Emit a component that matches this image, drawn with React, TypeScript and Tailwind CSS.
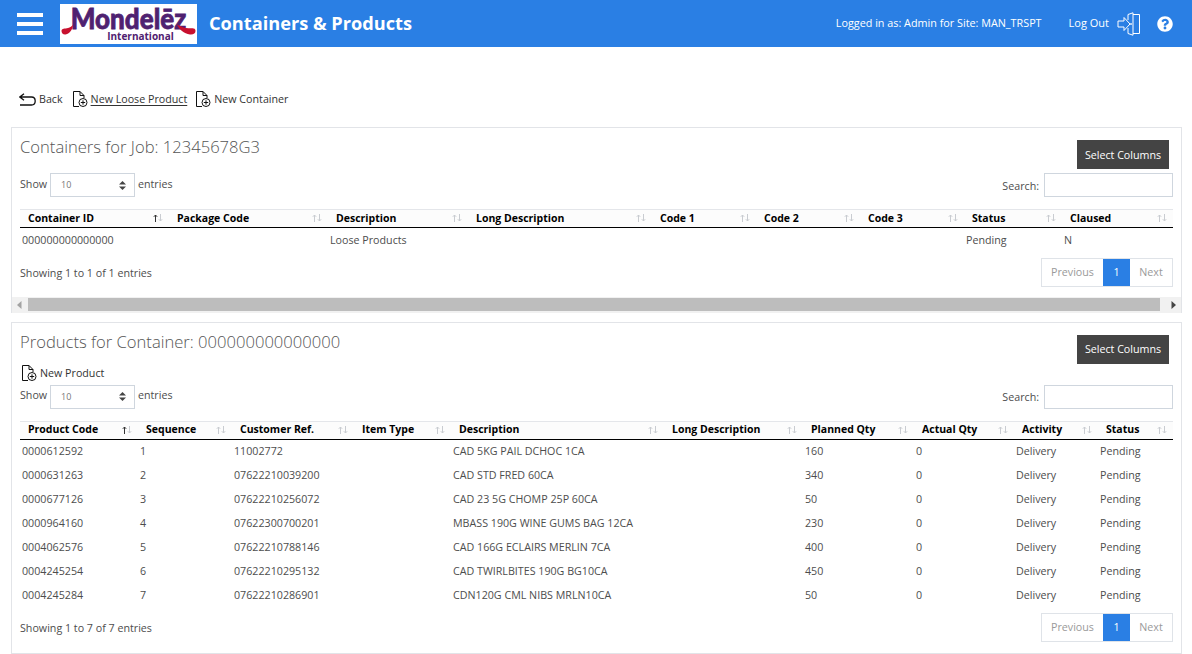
import { FaQuestionCircle } from 'react-icons/fa';

const containerCols = [
  { name: 'Container ID', w: 149, sorted: true },
  { name: 'Package Code', w: 159 },
  { name: 'Description', w: 140 },
  { name: 'Long Description', w: 184 },
  { name: 'Code 1', w: 104 },
  { name: 'Code 2', w: 104 },
  { name: 'Code 3', w: 104 },
  { name: 'Status', w: 98 },
  { name: 'Claused', w: 111 },
];

const containerRows = [['000000000000000', '', 'Loose Products', '', '', '', '', 'Pending', 'N']];

const productCols = [
  { name: 'Product Code', w: 118, sorted: true },
  { name: 'Sequence', w: 94 },
  { name: 'Customer Ref.', w: 122 },
  { name: 'Item Type', w: 97 },
  { name: 'Description', w: 213 },
  { name: 'Long Description', w: 139 },
  { name: 'Planned Qty', w: 111 },
  { name: 'Actual Qty', w: 100 },
  { name: 'Activity', w: 84 },
  { name: 'Status', w: 75 },
];

const productRows = [
  ['0000612592', '1', '11002772', '', 'CAD 5KG PAIL DCHOC 1CA', '', '160', '0', 'Delivery', 'Pending'],
  ['0000631263', '2', '07622210039200', '', 'CAD STD FRED 60CA', '', '340', '0', 'Delivery', 'Pending'],
  ['0000677126', '3', '07622210256072', '', 'CAD 23 5G CHOMP 25P 60CA', '', '50', '0', 'Delivery', 'Pending'],
  ['0000964160', '4', '07622300700201', '', 'MBASS 190G WINE GUMS BAG 12CA', '', '230', '0', 'Delivery', 'Pending'],
  ['0004062576', '5', '07622210788146', '', 'CAD 166G ECLAIRS MERLIN 7CA', '', '400', '0', 'Delivery', 'Pending'],
  ['0004245254', '6', '07622210295132', '', 'CAD TWIRLBITES 190G BG10CA', '', '450', '0', 'Delivery', 'Pending'],
  ['0004245284', '7', '07622210286901', '', 'CDN120G CML NIBS MRLN10CA', '', '50', '0', 'Delivery', 'Pending'],
];

function SortIcon({ active }: { active?: boolean }) {
  return (
    <svg width="10" height="8" viewBox="0 0 10 8" fill="none" strokeWidth="1" className="shrink-0">
      <path d="M2.5 8V1M0.8 2.8L2.5 1L4.2 2.8" stroke={active ? '#333' : '#c9ccd1'} />
      <path d="M7.5 0V7M5.8 5.2L7.5 7L9.2 5.2" stroke="#c9ccd1" />
    </svg>
  );
}

function DocIcon() {
  return (
    <svg width="16" height="18" viewBox="1 0 16 18" fill="none" stroke="#111" strokeWidth="1">
      <path d="M7 16.5H1.5V1.5H8L12 5.500V8" />
      <path d="M8 1.5V5.500H12" />
      <circle cx="11" cy="12.5" r="4" />
      <path d="M11 10.3V14.7M8.8 12.5H13.2" />
    </svg>
  );
}

function DataTable({ cols, rows }: { cols: { name: string; w: number; sorted?: boolean }[]; rows: string[][] }) {
  return (
    <table className="w-[1153px] table-fixed border-collapse">
      <colgroup>
        {cols.map((c) => (
          <col key={c.name} style={{ width: c.w }} />
        ))}
      </colgroup>
      <thead>
        <tr className="h-[18px] border-t border-b border-t-[#e4e6ea] border-b-black bg-[#fcfcfc]">
          {cols.map((c) => (
            <th key={c.name} className="pl-2 pr-[6px] text-left text-[10.5px] font-bold text-black">
              <div className="mt-[-1px] flex h-4 items-center justify-between leading-[15px]">
                <span>{c.name}</span>
                <SortIcon active={c.sorted} />
              </div>
            </th>
          ))}
        </tr>
      </thead>
      <tbody>
        {rows.map((row) => (
          <tr key={row[0]} className="h-6">
            {row.map((cell, i) => (
              <td key={i} className="truncate pl-[2px]">
                {cell}
              </td>
            ))}
          </tr>
        ))}
      </tbody>
    </table>
  );
}

function Controls() {
  return (
    <div className="flex h-6 items-center justify-between">
      <div className="flex items-center">
        <span className="mt-[-2px] w-[30px]">Show</span>
        <div className="flex h-6 w-[85px] items-center justify-between border border-[#cfd6de] pl-[10px] pr-[8px] text-[9px] text-[#777]">
          <span>10</span>
          <svg width="7" height="9" viewBox="0 0 7 9" fill="#444">
            <path d="M3.5 0L7 3.5H0Z" />
            <path d="M3.5 9L0 5.5H7Z" />
          </svg>
        </div>
        <span className="ml-[3px] mt-[-2px]">entries</span>
      </div>
      <div className="flex items-center">
        <span className="mt-[2px]">Search:</span>
        <div className="ml-[5px] h-6 w-[129px] border border-[#cfd6de]" />
      </div>
    </div>
  );
}

function Footer({ info }: { info: string }) {
  return (
    <div className="flex items-start justify-between pt-[6px]">
      <span className="mt-[1px] leading-[28px]">{info}</span>
      <div className="flex h-[29px] border border-[#dfe3e8] text-[#9a9a9a]">
        <span className="flex w-[61px] items-center justify-center">Previous</span>
        <span className="flex w-[27px] items-center justify-center bg-[#2a7fe4] text-white">1</span>
        <span className="flex w-[42px] items-center justify-center">Next</span>
      </div>
    </div>
  );
}

function SelectColumns() {
  return (
    <button className="mr-1 flex h-[29px] w-[92px] items-center justify-center bg-[#444444] pt-px text-white">
      Select Columns
    </button>
  );
}

export default function App() {
  return (
    <div
      className="h-screen overflow-hidden bg-white text-[10.7px] text-[#4d4d4d]"
      style={{ fontFamily: '"Open Sans", "Noto Sans", sans-serif' }}
    >
      {/* Header */}
      <div className="flex h-[47px] items-center bg-[#2a7fe4] text-white">
        <div className="ml-[17px] flex w-[26px] flex-col gap-[5px]">
          <div className="h-1 bg-white" />
          <div className="h-1 bg-white" />
          <div className="h-1 bg-white" />
        </div>
        <div className="relative ml-[17px] flex h-10 w-[137px] flex-col items-center bg-white text-[#4f2170]">
          <span
            className="mt-[1px] scale-y-110 text-[26px] font-black leading-[27px] [-webkit-text-stroke:0.7px_#4f2170]"
            style={{ fontFamily: 'Lato, sans-serif' }}
          >
            Mondelēz
          </span>
          <span className="mt-[-2px] ml-[24px] text-[10px] font-bold leading-[12px]">International</span>
          <svg width="137" height="40" viewBox="0 0 137 40" fill="#c8102e" className="absolute left-0 top-0">
            <path d="M1.500 27C1.500 24 5 25 8 24C10 23.500 12 22 13 21C12.500 25 10 30 5.500 30.500C3 30.800 1.500 29 1.500 27Z" />
            <path d="M135.500 27C135.500 23 131 25 126 24C122.500 23.400 120 22 117 20.500C119 25 124 30 130 30.500C133.500 30.800 135.500 29.500 135.500 27Z" />
          </svg>
        </div>
        <h1 className="ml-3 text-[18.2px] font-bold leading-none">Containers &amp; Products</h1>
        <div className="ml-auto flex items-center">
          <span className="text-[10.8px]">Logged in as: Admin for Site: MAN_TRSPT</span>
          <span className="ml-[27px] text-[11px]">Log Out</span>
          <svg width="24" height="24" viewBox="0 0 24 24" fill="none" stroke="white" strokeWidth="1" className="ml-2">
            <path d="M1 9H7V5.5L13 12L7 18.500V15H1Z" />
            <path d="M11 2.500L16 0.800V23.200L11 21.500V16M11 8V2.500M16 2.500H22.500V21.500H16" />
            <circle cx="14" cy="12" r="0.5" fill="white" />
          </svg>
          <FaQuestionCircle className="ml-[16px] mr-[19px] h-4 w-4 text-white" />
        </div>
      </div>

      {/* Actions */}
      <div className="mt-[42px] flex h-[20px] items-center pl-[19px] text-[#333]">
        <svg width="17" height="13" viewBox="0 0 17 13" fill="none" stroke="#111" strokeWidth="1.300">
          <path d="M5 0.800L0.800 4L5 7.200M1 4H12.500C15 4 16.200 5.800 16.200 8C16.200 10.200 15 12 12.500 12H1" />
        </svg>
        <span className="ml-[3px]">Back</span>
        <div className="ml-[10px]">
          <DocIcon />
        </div>
        <span className="ml-[2px] underline underline-offset-2">New Loose Product</span>
        <div className="ml-[9px]">
          <DocIcon />
        </div>
        <span className="ml-[2px]">New Container</span>
      </div>

      {/* Containers */}
      <div className="ml-[11px] mr-[10px] mt-[18px] border border-b-0 border-[#e2e4e8]">
        <div className="px-2 pt-3">
          <div className="flex items-start justify-between">
            <h2 className="text-[16.6px] font-light leading-[14px] text-[#555]">Containers for Job: 12345678G3</h2>
            <SelectColumns />
          </div>
          <div className="mt-1">
            <Controls />
          </div>
          <div className="mt-3">
            <DataTable cols={containerCols} rows={containerRows} />
          </div>
          <Footer info="Showing 1 to 1 of 1 entries" />
        </div>
        <div className="mt-[10px] flex h-4 items-center bg-[#f1f1f1]">
          <svg width="16" height="16" viewBox="0 0 16 16" fill="#a3a3a3">
            <path d="M5 8L9.500 4V12Z" />
          </svg>
          <div className="h-[13px] flex-1 bg-[#bdbdbd]" />
          <svg width="21" height="16" viewBox="0 0 21 16" fill="#444">
            <path d="M16 8L11.500 4V12Z" />
          </svg>
        </div>
      </div>

      {/* Products */}
      <div className="ml-[11px] mr-[10px] mt-[9px] h-[332px] border border-[#e2e4e8] px-2 pt-3">
        <div className="flex items-start justify-between">
          <h2 className="text-[16.6px] font-light leading-[14px] text-[#555]">Products for Container: 000000000000000</h2>
          <SelectColumns />
        </div>
        <div className="flex h-[21px] items-center pb-[2px] pl-[2px] text-[#333]">
          <DocIcon />
          <span className="ml-[2px]">New Product</span>
        </div>
        <Controls />
        <div className="mt-3">
          <DataTable cols={productCols} rows={productRows} />
        </div>
        <Footer info="Showing 1 to 7 of 7 entries" />
      </div>
    </div>
  );
}
